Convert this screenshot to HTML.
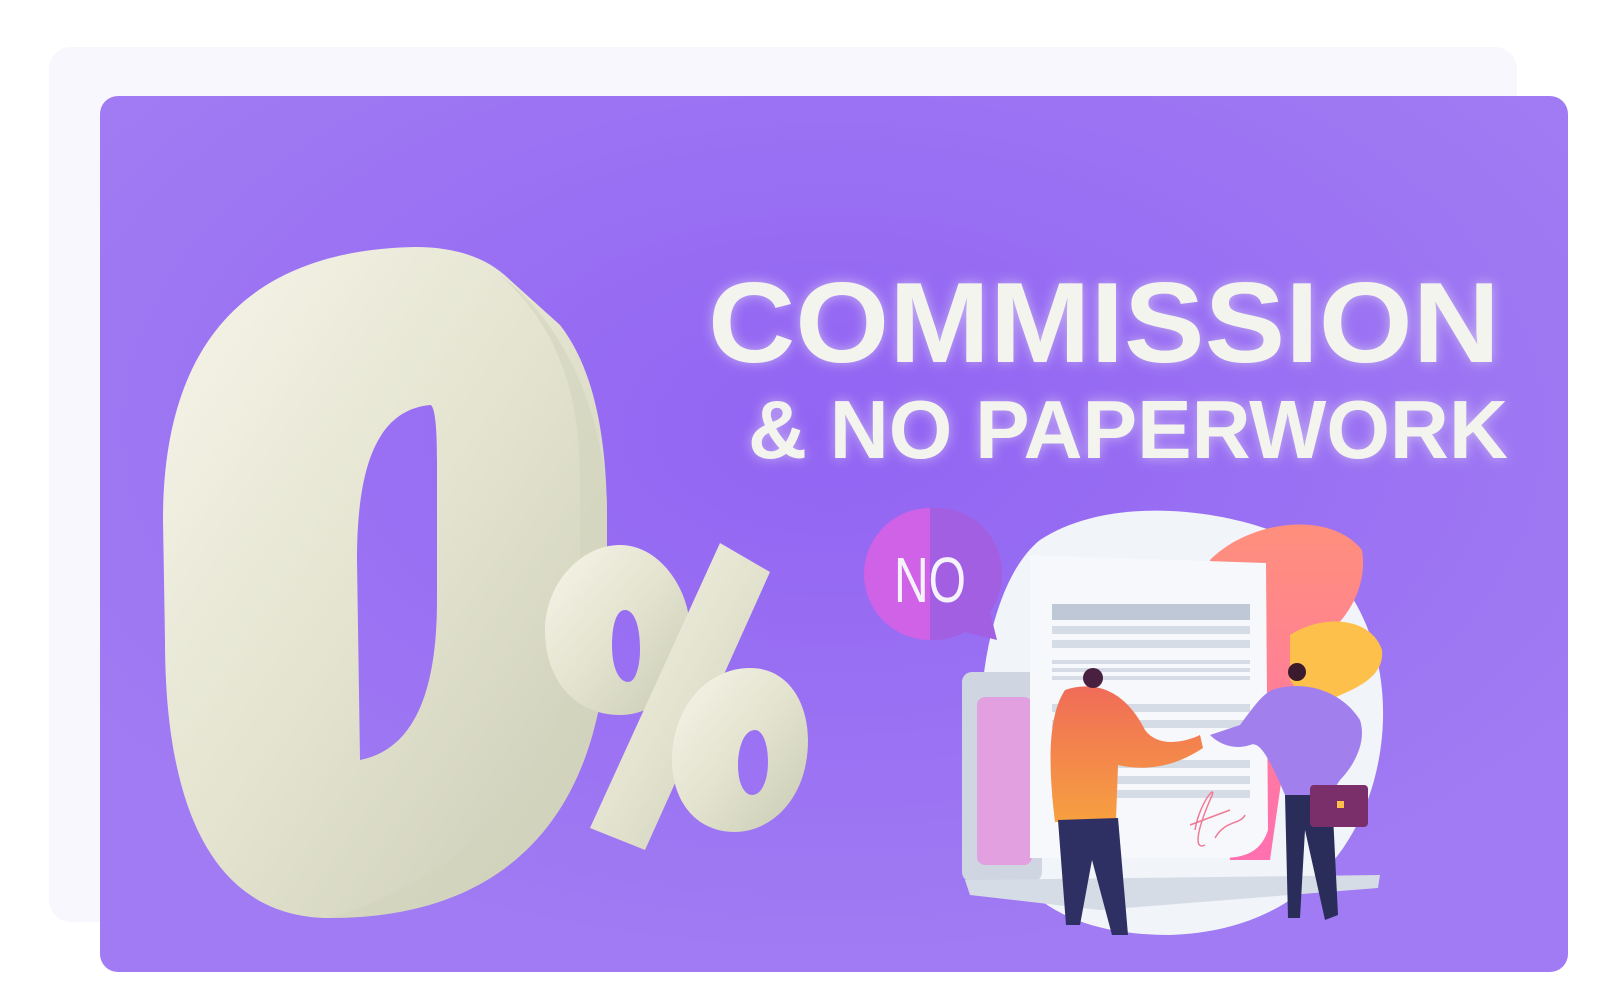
<!DOCTYPE html>
<html><head><meta charset="utf-8"><style>
html,body{margin:0;padding:0;background:#fff;width:1600px;height:992px;overflow:hidden}
svg{display:block}
</style></head><body>
<svg width="1600" height="992" viewBox="0 0 1600 992" xmlns="http://www.w3.org/2000/svg">
<defs>
<radialGradient id="bg" cx="0.5" cy="0.38" r="0.6">
<stop offset="0" stop-color="#9264f3"/><stop offset="1" stop-color="#a07bf3"/>
</radialGradient>
<linearGradient id="cream" x1="0" y1="0" x2="1" y2="1">
<stop offset="0" stop-color="#f7f5ea"/><stop offset="0.5" stop-color="#e3e3cf"/><stop offset="1" stop-color="#c9cbb4"/>
</linearGradient>
<linearGradient id="orange" x1="0" y1="0" x2="0" y2="1"><stop offset="0" stop-color="#f06c58"/><stop offset="1" stop-color="#f7a040"/></linearGradient>
<linearGradient id="leaf" x1="0" y1="0" x2="0" y2="1"><stop offset="0" stop-color="#ff8f7c"/><stop offset="1" stop-color="#ff70b0"/></linearGradient>
<filter id="glow" x="-20%" y="-50%" width="140%" height="200%"><feGaussianBlur stdDeviation="6" result="b"/><feComponentTransfer in="b" result="c"><feFuncA type="linear" slope="0.5"/></feComponentTransfer><feMerge><feMergeNode in="c"/><feMergeNode in="SourceGraphic"/></feMerge></filter>
</defs>
<rect x="49" y="47" width="1468" height="875" rx="22" fill="#f8f7fd"/>
<rect x="100" y="96" width="1468" height="876" rx="18" fill="url(#bg)"/>
<path fill-rule="evenodd" fill="url(#cream)" d="M415 247 C460 247 490 260 510 280 L560 325 C595 370 607 440 607 520 L607 640 C600 800 520 918 330 918 C220 918 165 820 165 640 L163 520 C163 330 260 250 415 247 Z M430 405 C380 410 357 460 357 560 L360 760 C410 750 437 700 437 600 L437 460 C437 420 434 405 430 405 Z"/>
<path fill="#d2d3bd" opacity="0.6" d="M500 275 C560 320 600 400 607 500 L607 640 C600 800 520 918 330 918 C450 880 560 800 580 620 L580 480 C580 380 550 320 500 275Z"/>
<path fill="url(#cream)" fill-rule="evenodd" d="M620 545 C660 545 690 590 690 630 C690 680 660 715 620 715 C575 715 545 680 545 630 C545 585 580 545 620 545Z M625 610 C615 610 612 630 612 645 C612 670 620 682 628 682 C636 682 640 665 640 650 C640 625 634 610 625 610Z"/>
<path fill="url(#cream)" d="M720 543 L770 572 L645 850 L590 828 Z"/>
<path fill="url(#cream)" fill-rule="evenodd" d="M750 668 C790 668 808 705 808 740 C808 800 770 832 735 832 C695 832 672 800 672 760 C672 710 705 668 750 668Z M755 730 C743 730 738 750 738 765 C738 785 745 795 752 795 C762 795 768 780 768 762 C768 742 762 730 755 730Z"/>
<g filter="url(#glow)" fill="#f4f4ee" font-family="Liberation Sans, sans-serif" font-weight="bold">
<text x="708" y="362" font-size="114" textLength="792" lengthAdjust="spacingAndGlyphs">COMMISSION</text>
<text x="748" y="458" font-size="83" textLength="760" lengthAdjust="spacingAndGlyphs">&amp; NO PAPERWORK</text>
</g>
<path fill="#f1f4f8" d="M1040 540 C1100 500 1200 505 1270 530 C1350 560 1385 640 1383 720 C1380 820 1320 930 1170 935 C1060 935 1000 890 985 800 C970 700 990 580 1040 540Z"/>
<path fill="url(#leaf)" d="M1210 560 C1250 520 1330 510 1362 550 C1370 600 1330 640 1300 650 L1270 860 L1230 860 Z"/>
<path fill="#fdc14b" d="M1290 635 C1320 615 1370 615 1382 650 C1385 680 1350 690 1330 700 L1320 720 L1290 680Z"/>
<rect x="962" y="672" width="80" height="210" rx="10" fill="#cfd6e1"/>
<rect x="977" y="697" width="55" height="168" rx="8" fill="#e3a0e0"/>
<path fill="#d6dce6" d="M965 880 L1380 875 L1378 888 L1100 910 L970 895Z"/>
<path fill="#f7f8fb" d="M1030 555 L1266 563 L1268 830 C1260 855 1240 858 1220 858 L1030 858 Z"/>
<rect x="1052" y="604" width="198" height="16" fill="#bfc8d6"/>
<g fill="#d6dce6"><rect x="1052" y="626" width="198" height="8"/><rect x="1052" y="640" width="198" height="8"/><rect x="1052" y="660" width="198" height="4"/><rect x="1052" y="668" width="198" height="4"/><rect x="1052" y="676" width="198" height="4"/><rect x="1052" y="704" width="198" height="8"/><rect x="1052" y="720" width="198" height="8"/><rect x="1052" y="760" width="198" height="8"/><rect x="1052" y="776" width="198" height="8"/><rect x="1052" y="790" width="198" height="8"/></g>
<path d="M1195 830 C1200 800 1220 780 1210 800 C1195 835 1195 850 1205 845 M1190 825 L1230 810 M1215 838 C1225 820 1240 825 1245 815" fill="none" stroke="#f07a95" stroke-width="1.5"/>
<path fill="#cf62e6" d="M930 508 A66 66 0 0 0 930 640Z"/>
<path fill="#a25fe2" d="M930 508 A66 66 0 0 1 990 612 L997 640 L965 632 A66 66 0 0 1 930 640Z"/>
<text x="894" y="602" font-family="Liberation Sans, sans-serif" font-size="64" fill="#f6f2fb" textLength="72" lengthAdjust="spacingAndGlyphs">NO</text>
<path fill="url(#orange)" d="M1065 690 C1095 680 1125 690 1145 730 C1160 750 1190 740 1200 735 L1203 748 C1170 770 1140 770 1118 765 L1116 820 L1055 822 C1050 780 1045 720 1065 690Z"/>
<path fill="#2e3064" d="M1058 820 L1118 818 L1128 935 L1112 935 L1092 860 L1080 925 L1066 925 Z"/>
<circle cx="1093" cy="678" r="10" fill="#4a2040"/>
<path fill="#a180ee" d="M1272 690 C1300 680 1340 688 1360 720 C1368 745 1350 770 1340 780 L1330 795 L1285 795 C1270 760 1260 740 1250 745 C1235 750 1220 745 1210 735 L1240 725 C1255 705 1262 695 1272 690Z"/>
<path fill="#2a2c5a" d="M1285 795 L1332 795 L1338 915 L1325 920 L1305 830 L1300 918 L1288 918Z"/>
<circle cx="1297" cy="672" r="9" fill="#3a1a2c"/>
<rect x="1310" y="785" width="58" height="42" rx="4" fill="#7a2e6a"/>
<rect x="1337" y="801" width="7" height="7" fill="#fdc14b"/>
</svg>
</body></html>
